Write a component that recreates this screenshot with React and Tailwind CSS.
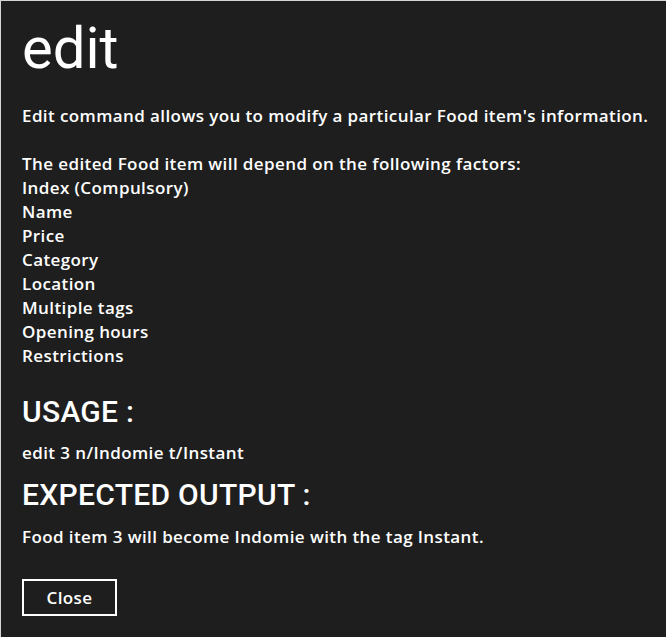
import React from "react";

const factors = [
  "Index (Compulsory)",
  "Name",
  "Price",
  "Category",
  "Location",
  "Multiple tags",
  "Opening hours",
  "Restrictions",
];

export default function App() {
  return (
    <div
      className="w-[666px] h-[637px] bg-[#1e1e1e] text-white border-t border-l border-[#d4d4d4] pl-[21px] pr-[10px] pt-[18px] overflow-hidden"
      style={{ fontFamily: "Roboto, 'Liberation Sans', sans-serif" }}
    >
      <h1 className="text-[58px] leading-none">edit</h1>

      <div className="mt-[27px] text-[17px] leading-[24px] tracking-[0.4px] whitespace-nowrap font-semibold font-['Open_Sans',sans-serif]">
        <p>Edit command allows you to modify a particular Food item's information.</p>
        <p className="mt-[24px]">The edited Food item will depend on the following factors:</p>
        {factors.map((f) => (
          <p key={f}>{f}</p>
        ))}
      </div>

      <h2 className="mt-[29px] text-[30px] leading-none tracking-[0.3px] font-medium">USAGE :</h2>
      <p className="mt-[14px] text-[17px] leading-[24px] tracking-[0.4px] whitespace-nowrap font-semibold font-['Open_Sans',sans-serif]">
        edit 3 n/Indomie t/Instant
      </p>

      <h2 className="mt-[15px] text-[30px] leading-none tracking-[0.3px] font-medium">EXPECTED OUTPUT :</h2>
      <p className="mt-[15px] text-[17px] leading-[24px] tracking-[0.4px] whitespace-nowrap font-semibold font-['Open_Sans',sans-serif]">
        Food item 3 will become Indomie with the tag Instant.
      </p>

      <button className="mt-[30px] w-[95px] h-[37px] border-2 border-white text-[17px] tracking-[0.4px] font-semibold font-['Open_Sans',sans-serif]">
        Close
      </button>
    </div>
  );
}
